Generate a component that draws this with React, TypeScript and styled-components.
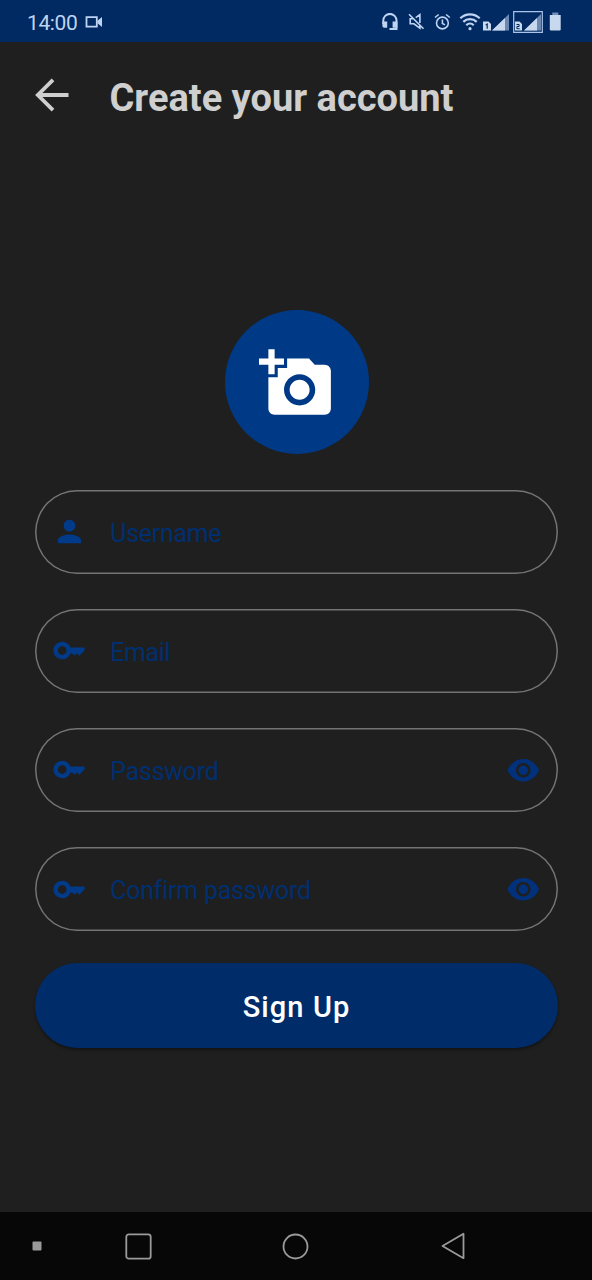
import React from "react";
import styled, { createGlobalStyle } from "styled-components";

const GlobalStyle = createGlobalStyle`
  * { box-sizing: border-box; }
  body { margin: 0; background: #1f1f1f; font-family: Roboto, "Liberation Sans", sans-serif; }
  svg { display: block; flex: none; }
`;

const Screen = styled.div`
  width: 592px;
  height: 1280px;
  display: flex;
  flex-direction: column;
  background: #1f1f1f;
`;

const StatusBar = styled.header`
  height: 42px;
  flex: none;
  display: flex;
  align-items: center;
  justify-content: space-between;
  padding: 1px 30px 0 27px;
  background: #002a61;
  color: #bfd3f2;
`;

const StatusGroup = styled.div`
  display: flex;
  align-items: center;
`;

const Clock = styled.span`
  font-size: 21px;
  line-height: 24px;
  letter-spacing: -0.4px;
  width: 58px;
  padding-top: 2px;
`;

const StatusIcon = styled.svg<{ $before?: number }>`
  margin-left: ${({ $before = 0 }) => $before}px;
`;

const TitleBar = styled.div`
  height: 110px;
  flex: none;
  display: flex;
  align-items: center;
  padding-left: 35px;
`;

const BackButton = styled.button`
  width: 74.5px;
  padding: 0 0 4px;
  border: 0;
  background: none;
  color: #cfcfcf;
`;

const Title = styled.h1`
  margin: 0;
  padding-top: 1px;
  font-size: 38px;
  line-height: 44px;
  font-weight: 700;
  color: #cfcfcf;
  white-space: nowrap;
`;

const Form = styled.form`
  flex: 1;
  display: flex;
  flex-direction: column;
  align-items: center;
  padding: 158px 34px 0 35px;
`;

const PhotoButton = styled.button`
  width: 144px;
  height: 144px;
  flex: none;
  display: flex;
  padding: 36px 0 0 34px;
  margin: 0 0 35.5px 1px;
  border: 0;
  border-radius: 50%;
  background: #003a87;
  color: #fff;
`;

const Field = styled.label`
  width: 523px;
  height: 84.5px;
  flex: none;
  display: flex;
  align-items: center;
  margin: 0 0.5px 34.6px 0;
  padding: 0 17px 0 17.5px;
  border-radius: 43px;
  box-shadow: inset 0 0 0 1.5px #747474;
  color: #003a88;
`;

const Placeholder = styled.span<{ $spacing?: number }>`
  flex: 1;
  padding: 4px 0 0 23px;
  font-size: 25px;
  line-height: 30px;
  letter-spacing: ${({ $spacing = -0.3 }) => $spacing}px;
  color: #002f70;
`;

const SubmitButton = styled.button`
  width: 523px;
  height: 85px;
  flex: none;
  margin-top: -3px;
  padding: 4px 0 0;
  border: 0;
  border-radius: 43px;
  background: #002d6a;
  box-shadow: 0 2px 3px rgba(0, 0, 0, 0.4);
  color: #fff;
  font: 500 29px/34px Roboto, "Liberation Sans", sans-serif;
  letter-spacing: 1.1px;
`;

const NavBar = styled.nav`
  height: 68px;
  flex: none;
  display: flex;
  align-items: center;
  padding-left: 32px;
  background: #070707;
  color: #9a9a9a;
`;

const NavIcon = styled.svg<{ $before?: number }>`
  margin-left: ${({ $before = 0 }) => $before}px;
`;

const KeyIcon = () => (
  <svg width="35" height="35" viewBox="0 0 24 24" fill="currentColor">
    <path d="M22 10h-9.35C11.83 7.67 9.61 6 7 6c-3.31 0-6 2.69-6 6s2.69 6 6 6c2.61 0 4.83-1.67 5.65-4H14l1.5 1.6L17 14.1l1.8 1.5L22.2 12 22.6 11zM7 15c-1.65 0-3-1.35-3-3s1.35-3 3-3 3 1.35 3 3-1.35 3-3 3z" />
  </svg>
);

const PersonIcon = () => (
  <svg width="35" height="35" viewBox="0 0 24 24" fill="currentColor">
    <path d="M12 12c2.21 0 4-1.79 4-4s-1.79-4-4-4-4 1.79-4 4 1.79 4 4 4zm0 2c-2.67 0-8 1.34-8 4v2h16v-2c0-2.66-5.33-4-8-4z" />
  </svg>
);

const EyeIcon = () => (
  <svg width="34.5" height="34.5" viewBox="0 0 24 24" fill="#00317a">
    <path d="M12 4.2C7 4.2 2.73 7.61 1 12c1.73 4.39 6 7.8 11 7.8s9.27-3.41 11-7.8c-1.73-4.39-6-7.8-11-7.8zM12 17c-2.76 0-5-2.24-5-5s2.24-5 5-5 5 2.24 5 5-2.24 5-5 5zm0-8.3c-1.82 0-3.3 1.48-3.3 3.3s1.48 3.3 3.3 3.3 3.3-1.48 3.3-3.3-1.48-3.3-3.3-3.3z" />
  </svg>
);

const fields = [
  { label: "Username", icon: <PersonIcon />, hidden: false, spacing: -0.3 },
  { label: "Email", icon: <KeyIcon />, hidden: false, spacing: -0.4 },
  { label: "Password", icon: <KeyIcon />, hidden: true, spacing: -0.25 },
  { label: "Confirm password", icon: <KeyIcon />, hidden: true, spacing: -0.25 },
];

export default function App() {
  return (
    <Screen>
      <GlobalStyle />
      <StatusBar>
        <StatusGroup>
          <Clock>14:00</Clock>
          <StatusIcon width="18" height="12" viewBox="0 0 18 12" fill="none" stroke="currentColor" strokeWidth="1.8">
            <path d="M1.5 1.2h10.3v9.4H1.5z" />
            <path d="M12.5 4.8 17 1v10l-4.5-3.8z" fill="currentColor" stroke="none" />
          </StatusIcon>
        </StatusGroup>
        <StatusGroup>
          <StatusIcon width="16" height="18" viewBox="0 0 16 18" fill="none" stroke="currentColor" strokeWidth="2">
            <path d="M1.3 11V7.5a6.6 6.6 0 0 1 13.2 0v8.6H7.5" />
            <path d="M.4 8.5h4.8v6.3H2.2A1.8 1.8 0 0 1 .4 13zM10.6 8.5h4.8v6.3h-4.8z" fill="currentColor" stroke="none" />
          </StatusIcon>
          <StatusIcon $before={10} width="17" height="17" viewBox="0 0 17 17" fill="none" stroke="currentColor" strokeWidth="1.6">
            <path d="M1 1.2 15.5 15.8M7.7 4.6l4.2-3v8.3M5.1 5.8H2.2v5h3.7l6 4.3v-3" />
          </StatusIcon>
          <StatusIcon $before={9} width="17" height="18" viewBox="0 0 17 18" fill="none" stroke="currentColor" strokeWidth="1.6">
            <circle cx="8.4" cy="10" r="5.9" />
            <path d="M8.4 6.5v4l2.6 1.4M1 4.5 4.7 1.5M15.8 4.5l-3.7-3" />
          </StatusIcon>
          <StatusIcon $before={8} width="22" height="19" viewBox="0 0 22 19" fill="none" stroke="currentColor" strokeWidth="2.2">
            <path d="M1.3 6.3a13.8 13.8 0 0 1 19.4 0M4.3 9.9a9.5 9.5 0 0 1 13.4 0M7.3 13.2a5.3 5.3 0 0 1 7.4 0" />
            <circle cx="11" cy="16.7" r="1.6" fill="currentColor" stroke="none" />
          </StatusIcon>
          <StatusIcon $before={2} width="28" height="18" viewBox="0 0 28 18" fill="#c8d9ef">
            <path d="M0 8.5h5.5L8 11v6.5H0z" />
            <path d="M2.7 12 4.2 11.1v4.7" stroke="#002a61" strokeWidth="1.2" fill="none" />
            <path d="M9 17.5 26 1v16.5z" fill="#6c89b5" />
            <path d="M9 17.5 22 4.9v12.6z" />
          </StatusIcon>
          <StatusIcon $before={2} width="30" height="22" viewBox="0 0 30 22" fill="#c8d9ef">
            <path d="M.7.7h28.6v20.6H.7z" fill="none" stroke="#abc3e8" strokeWidth="1.2" />
            <path d="M2 10.5h4.5L9 13v6.5H2z" />
            <path d="M3.5 13.5h2.6v2H3.9v2.2h2.7" stroke="#002a61" strokeWidth="1" fill="none" />
            <path d="M11 19.5 28 3v16.5z" fill="#6c89b5" />
            <path d="M11 19.5 24 6.9v12.6z" />
          </StatusIcon>
          <StatusIcon $before={6} width="13" height="19" viewBox="0 0 13 19" fill="#c8d9ef">
            <path d="M3.3.5h6v3h-6z" fill="#728fb9" />
            <path d="M.8 3h10.9v14.2a1.3 1.3 0 0 1-1.3 1.3H2.1a1.3 1.3 0 0 1-1.3-1.3z" />
          </StatusIcon>
        </StatusGroup>
      </StatusBar>

      <TitleBar>
        <BackButton type="button" aria-label="Back">
          <svg width="34" height="34" viewBox="0 0 34 34" fill="none" stroke="currentColor" strokeWidth="3.8">
            <path d="M18 1.8 2.8 17 18 32.2M3 17h30.5" />
          </svg>
        </BackButton>
        <Title>Create your account</Title>
      </TitleBar>

      <Form>
        <PhotoButton type="button" aria-label="Add photo">
          <svg width="75" height="75" viewBox="0 0 24 24" fill="currentColor">
            <path d="M3 4V1h2v3h3v2H5v3H3V6H0V4h3zm3 6V7h3V4h7l1.83 2H21c1.1 0 2 .9 2 2v12c0 1.1-.9 2-2 2H5c-1.1 0-2-.9-2-2V10h3zm7 9c2.76 0 5-2.24 5-5s-2.24-5-5-5-5 2.24-5 5 2.24 5 5 5zm-3.2-5c0 1.77 1.43 3.2 3.2 3.2s3.2-1.43 3.2-3.2-1.43-3.2-3.2-3.2-3.2 1.43-3.2 3.2z" />
          </svg>
        </PhotoButton>
        {fields.map((f) => (
          <Field key={f.label}>
            {f.icon}
            <Placeholder $spacing={f.spacing}>{f.label}</Placeholder>
            {f.hidden && <EyeIcon />}
          </Field>
        ))}
        <SubmitButton type="button">Sign Up</SubmitButton>
      </Form>

      <NavBar>
        <NavIcon width="10" height="10" viewBox="0 0 10 10" fill="currentColor">
          <rect x=".5" y=".5" width="9" height="9" rx="1" />
        </NavIcon>
        <NavIcon $before={83} width="27" height="27" viewBox="0 0 27 27" fill="none" stroke="currentColor" strokeWidth="1.8">
          <rect x="1.3" y="1.3" width="24.4" height="24.4" rx="2.5" />
        </NavIcon>
        <NavIcon $before={130} width="27" height="27" viewBox="0 0 27 27" fill="none" stroke="currentColor" strokeWidth="1.8">
          <circle cx="13.5" cy="13.5" r="12" />
        </NavIcon>
        <NavIcon $before={132} width="25" height="28" viewBox="0 0 25 28" fill="none" stroke="currentColor" strokeWidth="1.8" strokeLinejoin="round">
          <path d="M1.5 14 22.5 1.8v24.4z" />
        </NavIcon>
      </NavBar>
    </Screen>
  );
}
